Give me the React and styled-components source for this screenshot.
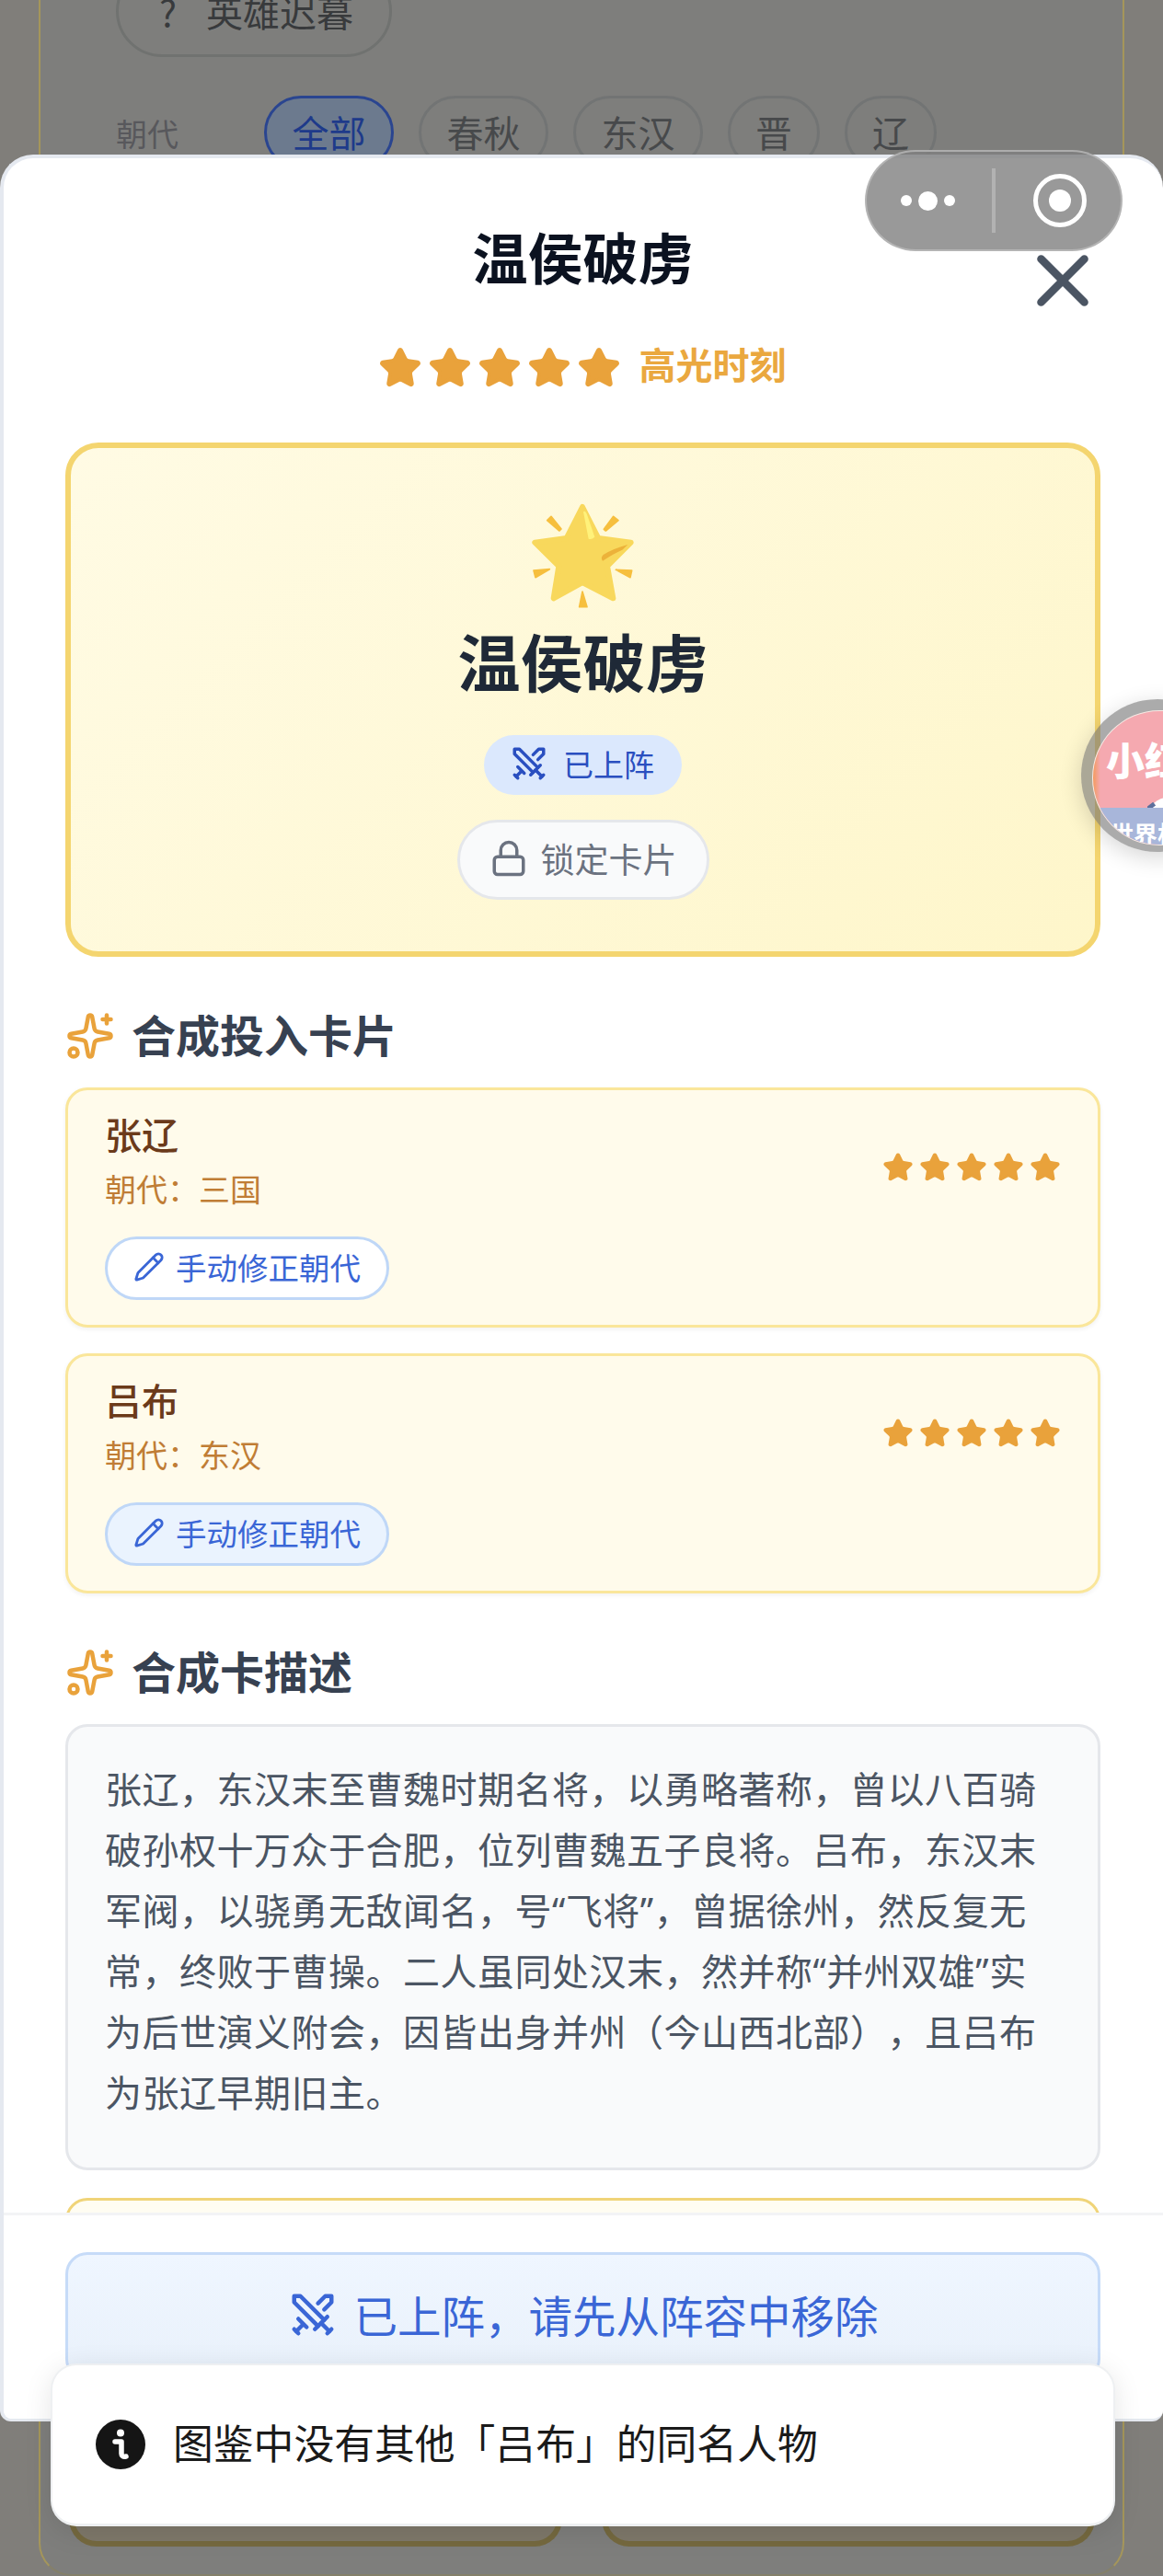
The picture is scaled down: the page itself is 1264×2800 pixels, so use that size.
import React from "react";
import styled, { createGlobalStyle } from "styled-components";
import { Lock, Pencil, Sparkles, Star, Swords, X } from "lucide-react";

const Global = createGlobalStyle`
  html, body { margin: 0; padding: 0; background: #807e7a; }
  * { box-sizing: border-box; }
  body { font-family: "Noto Sans CJK SC", "Noto Sans", sans-serif; }
`;

const Screen = styled.div`
  position: relative;
  width: 1264px;
  height: 2800px;
  overflow: hidden;
  background: #807e7a;
`;

/* Page behind the dimmed backdrop */
const BehindPanel = styled.div`
  display: flex;
  flex-direction: column;
  justify-content: space-between;
  height: 2800px;
  margin: 0 42px;
  padding: 0 30px 30px 32px;
  background: #7e7e7c;
  border: 2px solid #a5965a;
  border-top: 0;
  border-radius: 0 0 36px 36px;
  border-bottom-color: #85806a;
`;
const BehindTop = styled.div`
  display: flex;
  flex-direction: column;
  gap: 42px;
`;
const ThemePill = styled.div`
  display: flex;
  align-items: center;
  gap: 32px;
  width: 300px;
  height: 100px;
  margin: -38px 0 0 50px;
  padding-left: 44px;
  border: 3px solid #707270;
  border-radius: 50px;
  font-size: 40px;
  color: #383a3c;
`;
const FilterRow = styled.div`
  display: flex;
  align-items: center;
  margin-left: 50px;
`;
const FilterLabel = styled.div`
  width: 161px;
  font-size: 34px;
  color: #58585c;
`;
const Chips = styled.div`
  display: flex;
  gap: 27px;
`;
const Chip = styled.div`
  display: flex;
  align-items: center;
  justify-content: center;
  height: 80px;
  padding-bottom: 3px;
  width: ${(p) => (p.$wide ? 141 : 100)}px;
  border-radius: 40px;
  border: 3px solid ${(p) => (p.$active ? "#2a4590" : "#727474")};
  background: ${(p) => (p.$active ? "#6c7a8e" : "transparent")};
  color: ${(p) => (p.$active ? "#1e3a8a" : "#47494b")};
  font-size: 40px;
`;
const BehindCards = styled.div`
  display: flex;
  gap: 43px;
  margin-left: -1px;
`;
const BehindCard = styled.div`
  flex: 1;
  height: 120px;
  background: #7e786a;
  border: 6px solid #75693f;
  border-top: 0;
  border-radius: 0 0 30px 30px;
`;

/* Modal */
const Modal = styled.div`
  position: absolute;
  left: 0;
  top: 168px;
  width: 1264px;
  height: 2464px;
  display: flex;
  flex-direction: column;
  background: #fff;
  border: 4px solid #e5e9f0;
  border-right: 0;
  border-bottom-width: 3px;
  border-radius: 36px 36px 12px 12px;
  overflow: hidden;
`;
const ModalBody = styled.div`
  flex: 1;
  min-height: 0;
  overflow: hidden;
  padding: 0 68px 0 67px;
`;
const ModalHeading = styled.h1`
  margin: 64px 0 0;
  font-size: 60px;
  line-height: 84px;
  font-weight: 700;
  color: #0b1220;
  text-align: center;
`;
const RatingRow = styled.div`
  display: flex;
  align-items: center;
  justify-content: center;
  gap: 20px;
  margin: 51px 0 52px;
  padding-right: 2px;
`;
const Stars = styled.div`
  display: flex;
  gap: ${(p) => p.$gap}px;
  margin-top: ${(p) => p.$nudge || 0}px;
  color: #e9a23b;
  line-height: 0;
`;
const RatingLabel = styled.span`
  padding-bottom: 10px;
  font-size: 40px;
  line-height: 48px;
  font-weight: 700;
  color: #eaa83f;
`;
const CloseButton = styled.button`
  position: absolute;
  left: 1104px;
  top: 86px;
  width: 94px;
  height: 94px;
  padding: 0;
  border: 0;
  background: none;
  color: #4b5563;
  line-height: 0;
`;

const Hero = styled.section`
  display: flex;
  flex-direction: column;
  align-items: center;
  height: 559px;
  padding-top: 60px;
  background: linear-gradient(135deg, #fffbe4, #fef6ca);
  border: 6px solid #f4d56f;
  border-radius: 36px;
`;
const HeroTitle = styled.h2`
  margin: 10px 0 0;
  font-size: 68px;
  line-height: 92px;
  font-weight: 700;
  color: #1f2937;
`;
const StatusBadge = styled.div`
  display: flex;
  align-items: center;
  gap: 16px;
  height: 65px;
  margin-top: 35px;
  padding: 0 30px 3px 28px;
  background: #dbe8fd;
  border-radius: 33px;
  font-size: 33px;
  color: #2a4fc0;
`;
const LockButton = styled.button`
  display: flex;
  align-items: center;
  gap: 14px;
  height: 87px;
  margin-top: 27px;
  padding: 0 32px 4px 32px;
  background: #f9fafb;
  border: 3px solid #e5e7eb;
  border-radius: 44px;
  font: inherit;
  font-size: 37px;
  color: #6b7280;
`;

const SectionHead = styled.div`
  display: flex;
  align-items: center;
  gap: 18px;
  margin: ${(p) => p.$top}px 0 24px;
  height: 64px;
  color: #e9a23b;
`;
const SectionTitle = styled.h3`
  margin: 0;
  padding-bottom: 7px;
  font-size: 48px;
  line-height: 64px;
  font-weight: 700;
  color: #374151;
`;
const SourceCard = styled.div`
  height: 261px;
  margin-bottom: 28px;
  padding: 19px 40px 0;
  background: #fffbeb;
  border: 3px solid #fae69a;
  border-radius: 24px;
  box-shadow: 0 2px 5px rgba(0, 0, 0, 0.06);
`;
const SourceTop = styled.div`
  display: flex;
  align-items: center;
  justify-content: space-between;
`;
const SourceName = styled.div`
  font-size: 40px;
  line-height: 56px;
  font-weight: 500;
  color: #6b3a1a;
`;
const SourceDynasty = styled.div`
  margin-top: 8px;
  font-size: 34px;
  line-height: 48px;
  color: #c07d35;
`;
const FixButton = styled.button`
  display: flex;
  align-items: center;
  gap: 12px;
  height: 69px;
  margin-top: 28px;
  padding: 0 28px 4px;
  background: ${(p) => (p.$tinted ? "#eaf3fe" : "#fff")};
  border: 3px solid #bfd7f7;
  border-radius: 35px;
  font: inherit;
  font-size: 33.5px;
  color: #3a66d6;
`;
const Description = styled.div`
  height: 485px;
  padding: 35px 56px 31px 40px;
  background: #f9fafb;
  border: 3px solid #e5e7eb;
  border-radius: 24px;
  font-family: "Noto Sans", "Noto Sans CJK SC", sans-serif;
  font-size: 40px;
  letter-spacing: 0.5px;
  line-height: 66px;
  text-spacing-trim: space-all;
  color: #4b5563;
`;
const PeekCard = styled.div`
  height: 120px;
  margin-top: 30px;
  background: #fffdf2;
  border: 3px solid #f0d478;
  border-radius: 24px;
`;
const Footer = styled.div`
  flex: none;
  height: 224px;
  padding: 40px 68px 0 67px;
  background: #fff;
  border-top: 3px solid #f3f4f6;
`;
const RemoveButton = styled.button`
  display: flex;
  align-items: center;
  justify-content: center;
  gap: 18px;
  width: 100%;
  height: 140px;
  padding-bottom: 6px;
  background: linear-gradient(180deg, #eff6ff, #e9f1fb);
  border: 3px solid #c6dbf8;
  border-radius: 24px;
  font: inherit;
  font-size: 47.5px;
  color: #3a66d6;
`;

/* Overlays */
const Capsule = styled.div`
  position: absolute;
  left: 940px;
  top: 163px;
  width: 280px;
  height: 110px;
  display: flex;
  align-items: center;
  background: rgba(128, 128, 128, 0.8);
  border: 2px solid rgba(190, 190, 190, 0.75);
  border-radius: 55px;
`;
const CapsuleSide = styled.div`
  flex: 1;
  display: flex;
  align-items: center;
  justify-content: center;
  gap: 7px;
  padding: 0 ${(p) => (p.$shift < 0 ? 3 : 0)}px 0 ${(p) => (p.$shift > 0 ? 4 : 0)}px;
  line-height: 0;
`;
const Dot = styled.span`
  width: ${(p) => p.$size}px;
  height: ${(p) => p.$size}px;
  background: #fff;
  border-radius: 50%;
`;
const CapsuleDivider = styled.span`
  width: 4px;
  height: 70px;
  background: rgba(255, 255, 255, 0.25);
`;
const FloatRing = styled.div`
  position: absolute;
  left: 1175px;
  top: 760px;
  width: 166px;
  height: 166px;
  padding: 12px;
  background: rgba(115, 115, 115, 0.6);
  border-radius: 50%;
  box-shadow: 0 6px 24px rgba(0, 0, 0, 0.16);
`;
const FloatLogo = styled.div`
  position: relative;
  width: 146px;
  height: 147px;
  overflow: hidden;
  border-radius: 50%;
  border: 1px solid #f6e9e4;
  background: linear-gradient(90deg, #f39a5e 0, #f5a9b0 8px);
  display: flex;
  flex-direction: column;
  justify-content: space-between;
`;
const LogoTitle = styled.div`
  padding: 24px 0 0 14px;
  font-size: 42px;
  line-height: 56px;
  font-weight: 900;
  color: #fff;
  white-space: nowrap;
`;
const LogoStrip = styled.div`
  position: relative;
  z-index: 1;
  height: 40px;
  padding-left: 18px;
  background: #a8b6da;
  font-size: 26px;
  line-height: 56px;
  font-weight: 700;
  color: #fff;
  white-space: nowrap;
`;
const LogoBall = styled.svg`
  position: absolute;
  left: 59px;
  top: 93px;
`;
const Toast = styled.div`
  position: absolute;
  left: 55px;
  top: 2569px;
  width: 1157px;
  height: 177px;
  display: flex;
  align-items: center;
  gap: 30px;
  padding: 0 0 0 47px;
  background: #fff;
  border: 2px solid #eef0f2;
  border-bottom-width: 3px;
  border-radius: 28px;
  box-shadow: 0 6px 30px rgba(0, 0, 0, 0.1);
  font-size: 43.8px;
  color: #1a1a1a;
`;
const ToastText = styled.span`
  padding-bottom: 7px;
`;

const GlowStar = () => (
  <svg width="111" height="115" viewBox="295 80 333 345" aria-hidden="true">
    <g fill="#f6bf3e" stroke="#f6bf3e" strokeWidth="5" strokeLinejoin="round">
      <polygon points="345,136 358,123 391,164 385,170" />
      <polygon points="530,165 561,123 577,136 536,170" />
      <polygon points="301,299 353,295 307,322" />
      <polygon points="569,297 621,299 616,322" />
      <polygon points="450,418 460,368 475,418" />
    </g>
    <polygon
      points="460,92 512,194 618,208 541,285 560,390 460,338 366,390 383,285 305,208 408,194"
      fill="#f8d85c"
      stroke="#f8d85c"
      strokeWidth="18"
      strokeLinejoin="round"
    />
    <path d="M463 108 Q470 102 476 120 L500 190 Q490 200 480 196 Z" fill="#fff27a" />
    <path d="M608 215 Q560 228 528 248 Q518 258 526 268 Q560 245 590 232 Z" fill="#ecb23a" />
  </svg>
);

const InfoIcon = () => (
  <svg width="54" height="54" viewBox="0 0 54 54" aria-hidden="true">
    <circle cx="27" cy="27" r="27" fill="#151515" />
    <circle cx="27" cy="14.5" r="4" fill="#fff" />
    <path d="M21 24h7v13q0 4 5 3" fill="none" stroke="#fff" strokeWidth="5.5" strokeLinecap="round" strokeLinejoin="round" />
  </svg>
);

const StarRow = ({ size, gap, nudge }) => (
  <Stars $gap={gap} $nudge={nudge}>
    {[0, 1, 2, 3, 4].map((i) => (
      <Star key={i} size={size} fill="currentColor" strokeWidth={2} />
    ))}
  </Stars>
);

const Source = ({ name, dynasty, tinted }) => (
  <SourceCard>
    <SourceTop>
      <div>
        <SourceName>{name}</SourceName>
        <SourceDynasty>朝代：{dynasty}</SourceDynasty>
      </div>
      <StarRow size={34} gap={6} nudge={18} />
    </SourceTop>
    <FixButton $tinted={tinted}>
      <Pencil size={34} strokeWidth={2} />
      手动修正朝代
    </FixButton>
  </SourceCard>
);

export default function App() {
  return (
    <Screen>
      <Global />
      <BehindPanel>
        <BehindTop>
          <ThemePill>
            <span>?</span>
            英雄迟暮
          </ThemePill>
          <FilterRow>
            <FilterLabel>朝代</FilterLabel>
            <Chips>
              <Chip $wide $active>全部</Chip>
              <Chip $wide>春秋</Chip>
              <Chip $wide>东汉</Chip>
              <Chip>晋</Chip>
              <Chip>辽</Chip>
            </Chips>
          </FilterRow>
        </BehindTop>
        <BehindCards>
          <BehindCard />
          <BehindCard />
        </BehindCards>
      </BehindPanel>

      <Modal>
        <ModalBody>
          <ModalHeading>温侯破虏</ModalHeading>
          <CloseButton aria-label="关闭">
            <X size={94} strokeWidth={2.2} />
          </CloseButton>
          <RatingRow>
            <StarRow size={48} gap={6} />
            <RatingLabel>高光时刻</RatingLabel>
          </RatingRow>
          <Hero>
            <GlowStar />
            <HeroTitle>温侯破虏</HeroTitle>
            <StatusBadge>
              <Swords size={42} strokeWidth={2} />
              已上阵
            </StatusBadge>
            <LockButton>
              <Lock size={42} strokeWidth={2} />
              锁定卡片
            </LockButton>
          </Hero>
          <SectionHead $top={54}>
            <Sparkles size={54} strokeWidth={2} />
            <SectionTitle>合成投入卡片</SectionTitle>
          </SectionHead>
          <Source name="张辽" dynasty="三国" />
          <Source name="吕布" dynasty="东汉" tinted />
          <SectionHead $top={54}>
            <Sparkles size={54} strokeWidth={2} />
            <SectionTitle>合成卡描述</SectionTitle>
          </SectionHead>
          <Description>
            张辽，东汉末至曹魏时期名将，以勇略著称，曾以八百骑破孙权十万众于合肥，位列曹魏五子良将。吕布，东汉末军阀，以骁勇无敌闻名，号“飞将”，曾据徐州，然反复无常，终败于曹操。二人虽同处汉末，然并称“并州双雄”实为后世演义附会，因皆出身并州（今山西北部），且吕布为张辽早期旧主。
          </Description>
          <PeekCard />
        </ModalBody>
        <Footer>
          <RemoveButton>
            <Swords size={54} strokeWidth={2} />
            已上阵，请先从阵容中移除
          </RemoveButton>
        </Footer>
      </Modal>

      <Capsule>
        <CapsuleSide $shift={-1}>
          <Dot $size={12} />
          <Dot $size={21} />
          <Dot $size={12} />
        </CapsuleSide>
        <CapsuleDivider />
        <CapsuleSide $shift={1}>
          <svg width="60" height="60" viewBox="0 0 60 60" aria-hidden="true">
            <circle cx="30" cy="30" r="26.5" fill="none" stroke="#fff" strokeWidth="5" />
            <circle cx="30" cy="30" r="12" fill="#fff" />
          </svg>
        </CapsuleSide>
      </Capsule>

      <FloatRing>
        <FloatLogo>
          <LogoTitle>小红书</LogoTitle>
          <LogoStrip>世界杯</LogoStrip>
          <LogoBall width="44" height="44" viewBox="0 0 46 46" aria-hidden="true">
            <circle cx="23" cy="23" r="22" fill="#fff" />
            <polygon points="23,14 31,20 28,29 18,29 15,20" fill="#5d6f9c" />
            <path d="M0 14 L8 8 M38 8 L46 16" stroke="#5d6f9c" strokeWidth="5" />
          </LogoBall>
        </FloatLogo>
      </FloatRing>

      <Toast>
        <InfoIcon />
        <ToastText>图鉴中没有其他「吕布」的同名人物</ToastText>
      </Toast>
    </Screen>
  );
}
